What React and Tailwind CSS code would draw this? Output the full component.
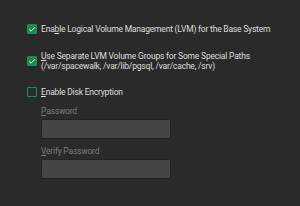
import { Check } from 'lucide-react';

const Box = ({ checked }) => (
  <span
    className={
      'flex h-[10px] w-[10px] shrink-0 items-center justify-center rounded-[1px] border ' +
      (checked ? 'border-[#1e8a55] bg-[#1e8a55]' : 'border-[#1e8a55] bg-transparent')
    }
  >
    {checked && <Check size={9} strokeWidth={3} className="text-[#e8e8e8]" />}
  </span>
);

const Row = ({ checked, children }) => (
  <div className="flex items-center gap-[4px]">
    <Box checked={checked} />
    <div className="text-[8.5px] leading-[10.5px] tracking-[-0.2px] text-[#dedede]">{children}</div>
  </div>
);

export default function App() {
  return (
    <div
      className="h-[206px] w-[300px] overflow-hidden bg-[#2a2a2a] pl-[27px] pt-[24px]"
      style={{ fontFamily: 'Roboto, "Liberation Sans", sans-serif' }}
    >
      <Row checked>
        Ena<u>b</u>le Logical Volume Management (LVM) for the Base System
      </Row>
      <div className="mt-[16px]">
        <Row checked>
          <u>U</u>se Separate LVM Volume Groups for Some Special Paths
          <br />
          (/var/spacewalk, /var/lib/pgsql, /var/cache, /srv)
        </Row>
      </div>
      <div className="mt-[15px]">
        <Row>
          <u>E</u>nable Disk Encryption
        </Row>
      </div>
      <div className="ml-[14px] mt-[9px] flex flex-col text-[8.5px] leading-[10px] tracking-[-0.2px] text-[#7c7c7c]">
        <span>
          <u>P</u>assword
        </span>
        <div className="mt-[3px] h-[20px] w-[130px] rounded-[2px] border border-[#232323] bg-[#454545]" />
        <span className="mt-[7px]">
          <u>V</u>erify Password
        </span>
        <div className="mt-[3px] h-[20px] w-[130px] rounded-[2px] border border-[#232323] bg-[#454545]" />
      </div>
    </div>
  );
}
